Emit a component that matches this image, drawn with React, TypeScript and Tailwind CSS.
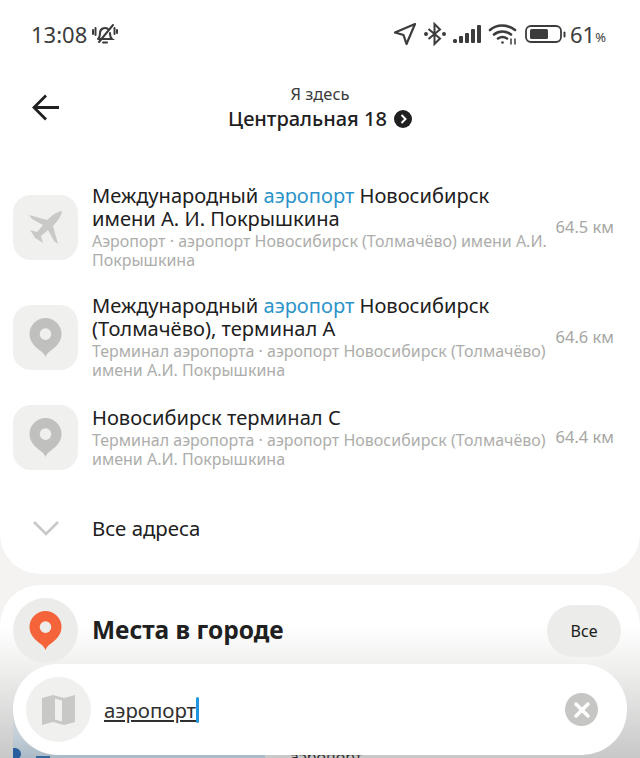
import { X } from "lucide-react";

const FONT = "font-['Noto_Sans',sans-serif]";

function PlaneIcon() {
  return (
    <svg width="36" height="36" viewBox="0 0 36 36" fill="#c9c9c7">
      <path d="M34 2C30 2.500 25 5.500 22 8.500L19 11 1 6l3 4 11 6-6 7-7-2 3 4.500 2 3.500 3.500 2 4.500 3-2-7 7-6 6 11 4 3-5-18 2.500-3C30.500 11 33.500 6 34 2Z" />
    </svg>
  );
}

function PinIcon({ color }: { color: string }) {
  return (
    <svg width="33" height="41" viewBox="0 0 34 40" fill="none">
      <path
        fillRule="evenodd"
        d="M17 0a16.500 16.500 0 0 1 16.500 16.500c0 8-6 13.600-11.500 17.500-2.500 1.800-4 3.500-5 6-1-2.500-2.500-4.200-5-6C6.500 30.100.5 24.500.5 16.500A16.500 16.500 0 0 1 17 0zm0 10.500a6 6 0 1 0 0 12 6 6 0 0 0 0-12z"
        fill={color}
      />
    </svg>
  );
}

function Result({
  icon,
  before,
  hit,
  after,
  line2,
  sub1,
  sub2,
  dist,
  className,
}: {
  icon: React.ReactNode;
  before: string;
  hit?: string;
  after?: string;
  line2?: string;
  sub1: string;
  sub2: string;
  dist: string;
  className?: string;
}) {
  return (
    <div className={`flex items-center pl-[13px] pr-[26px] ${className ?? ""}`}>
      <div className="flex h-[65px] w-[65px] shrink-0 items-center justify-center rounded-[18px] bg-[#f0f0ef]">
        {icon}
      </div>
      <div className="ml-[14px] min-w-0 flex-1">
        <div className="text-[20.1px] leading-[22.5px] text-[#202020]">
          {before}
          {hit && <span className="text-[#2b93c9]">{hit}</span>}
          {after}
          {line2 && <div>{line2}</div>}
        </div>
        <div className="mt-[2px] whitespace-nowrap text-[16px] leading-[18.500px] text-[#adadab]">
          <div>{sub1}</div>
          <div>{sub2}</div>
        </div>
      </div>
      <div className="shrink-0 whitespace-nowrap text-[16.5px] text-[#a6a6a4]">{dist}</div>
    </div>
  );
}

export default function App() {
  return (
    <div className={`relative h-[758px] w-[640px] overflow-hidden bg-[#f4f3f1] ${FONT}`}>
      <div className="h-[574px] rounded-b-[40px] bg-white">
        {/* status bar */}
        <div className="flex h-[68px] items-center justify-between pl-[31px] pr-[34px] text-[#3c3c3c]">
          <div className="flex items-center gap-[4px]">
            <span className="text-[22px] leading-none">13:08</span>
            <svg width="28" height="24" viewBox="0 0 28 24" fill="none" stroke="currentColor" strokeWidth="2" strokeLinecap="round">
              <path d="M7 17c2-1.500 2-3 2-6a5 5 0 0 1 9-3M19 11c0 3 0 4.500 2 6H7M12 20.500h4M22 3 8 20M2 8v4M4.500 6v7M23.500 6v6M26 8v3" />
            </svg>
          </div>
          <div className="flex items-center">
            <svg width="24" height="24" viewBox="0 0 24 24" fill="none" stroke="currentColor" strokeWidth="2.200" strokeLinejoin="round">
              <path d="M22 2 2 10.500l8.500 2.500 3 9z" />
            </svg>
            <svg className="ml-[6px]" width="24" height="24" viewBox="0 0 24 24" fill="none" stroke="currentColor" strokeWidth="2">
              <path d="M5.500 7 17 16.500 11.500 22V2L17 7.500 5.500 17" />
              <circle cx="3" cy="12" r="1" fill="currentColor" />
              <circle cx="21" cy="12" r="1" fill="currentColor" />
            </svg>
            <svg className="ml-[5px]" width="30" height="20" viewBox="0 0 30 20" fill="currentColor">
              <rect x="1" y="15" width="4" height="4" rx="1.500" />
              <rect x="7" y="12" width="4" height="7" rx="1" />
              <rect x="13" y="9" width="4" height="10" rx="1" />
              <rect x="19" y="5" width="4" height="14" rx="1" />
              <rect x="25" y="1" width="4" height="18" rx="1" />
            </svg>
            <svg className="ml-[6px]" width="30" height="22" viewBox="0 0 30 22" fill="none" stroke="currentColor" strokeWidth="2.600" strokeLinecap="round">
              <path d="M2 7c7-6 17-6 25 0M6 11.500c5-4 12-4 17 0M10 15.500c3-2 6-2 9 0" />
              <circle cx="14.500" cy="19.500" r="1.300" fill="currentColor" stroke="none" />
              <path d="M23 16v5M27 16v5" strokeWidth="1.500" />
            </svg>
            <svg className="ml-[7px]" width="42" height="20" viewBox="0 0 42 20" fill="none">
              <rect x="1" y="2" width="35" height="16" rx="5" stroke="currentColor" strokeWidth="1.800" />
              <rect x="5" y="5" width="18" height="10" rx="1.500" fill="currentColor" />
              <rect x="38.500" y="7.500" width="2" height="6" rx="1" fill="currentColor" />
            </svg>
            <span className="ml-[3px] text-[22px] leading-none">61</span>
            <span className="self-end pb-[2px] text-[13px] leading-none">%</span>
          </div>
        </div>
        {/* header */}
        <div className="relative flex h-[76px] flex-col items-center pt-[16px]">
          <svg className="absolute left-[32px] top-[26px]" width="28" height="28" viewBox="0 0 28 28" fill="none" stroke="#202020" strokeWidth="2.800">
            <path d="M27 13.500H2M14 1.500 2 13.500l12 12" />
          </svg>
          <div className="text-[16.5px] leading-[20px] text-[#3c3c3c]">Я здесь</div>
          <div className="mt-[2px] flex items-center gap-[7px]">
            <span className="text-[20px] font-medium leading-[26px] text-[#202020]">Центральная 18</span>
            <span className="flex h-[18px] w-[18px] items-center justify-center rounded-full bg-[#202020]">
              <svg width="10" height="10" viewBox="0 0 10 10" fill="none" stroke="white" strokeWidth="2">
                <path d="m3.500 1 4 4-4 4" />
              </svg>
            </span>
          </div>
        </div>
        {/* results */}
        <Result
          className="mt-[41px]"
          icon={<PlaneIcon />}
          before="Международный "
          hit="аэропорт"
          after=" Новосибирск"
          line2="имени А. И. Покрышкина"
          sub1="Аэропорт · аэропорт Новосибирск (Толмачёво) имени А.И."
          sub2="Покрышкина"
          dist="64.5 км"
        />
        <Result
          className="mt-[26px]"
          icon={<PinIcon color="#c0c0be" />}
          before="Международный "
          hit="аэропорт"
          after=" Новосибирск"
          line2="(Толмачёво), терминал А"
          sub1="Терминал аэропорта · аэропорт Новосибирск (Толмачёво)"
          sub2="имени А.И. Покрышкина"
          dist="64.6 км"
        />
        <Result
          className="mt-[26px]"
          icon={<PinIcon color="#c0c0be" />}
          before="Новосибирск терминал С"
          sub1="Терминал аэропорта · аэропорт Новосибирск (Толмачёво)"
          sub2="имени А.И. Покрышкина"
          dist="64.4 км"
        />
        <div className="mt-[45px] flex items-center pl-[33px]">
          <svg width="26" height="16" viewBox="0 0 26 16" fill="none" stroke="#c8c8c6" strokeWidth="2.600">
            <path d="m1 2 12 12L25 2" />
          </svg>
          <span className="ml-[33px] text-[20.4px] leading-[26px] text-[#202020]">Все адреса</span>
        </div>
      </div>
      {/* places card */}
      <div className="mt-[11px] h-[173px] rounded-t-[40px] bg-[linear-gradient(to_bottom,#fff_40px,#f1f1f0_79px,#c8c8c8_173px)] pt-[13px]">
        <div className="flex items-center px-[13px]">
          <div className="flex h-[65px] w-[65px] items-center justify-center rounded-full bg-[#ececeb]">
            <PinIcon color="#f4633a" />
          </div>
          <span className="ml-[14px] flex-1 text-[24.5px] font-bold text-[#202020]">Места в городе</span>
          <div className="mr-[6px] flex h-[52px] w-[74px] items-center justify-center rounded-[26px] bg-[#ececeb] text-[16px] text-[#202020]">
            Все
          </div>
        </div>
        {/* first place, mostly hidden behind the search bar */}
        <div className="mt-px flex pl-[13px]">
          <div className="relative h-[95px] w-[252px] bg-[linear-gradient(to_bottom,transparent_35px,#c5d0d8_70px,#a9b9c5_95px)]">
            <span className="absolute left-0 top-[84px] h-[12px] w-[8px] rounded-r-full bg-[#2a5f9e]" />
            <span className="absolute left-[23px] top-[92px] h-[4px] w-[14px] bg-[#34679c]" />
          </div>
          <span className="ml-[25px] mt-[83px] text-[16px] leading-[20px] text-[#303030]">аэропорт</span>
        </div>
      </div>
      {/* search bar */}
      <div className="absolute left-[13px] top-[664px] flex h-[91px] w-[614px] items-center rounded-[45px] bg-white pl-[13px] pr-[29px]">
        <div className="flex h-[65px] w-[65px] items-center justify-center rounded-full bg-[#f0f0ef]">
          <svg width="33" height="30" viewBox="0 0 33 30" fill="none">
            <path d="M0 3 11 0l11 3 11-3v27l-11 3-11-3-11 3z" fill="#c8c8c6" />
            <path d="M13 3.500 20 5.500v21l-7-2z" fill="#f0f0ef" />
          </svg>
        </div>
        <div className="ml-[13px] flex flex-1 items-center">
          <span className="text-[20.4px] leading-[26px] text-[#303030] underline underline-offset-2">аэропорт</span>
          <span className="h-[26px] w-[3px] rounded-sm bg-[#2196e0]" />
        </div>
        <div className="flex h-[33px] w-[33px] items-center justify-center rounded-full bg-[#c6c6c4]">
          <X size={24} strokeWidth={3.5} color="white" />
        </div>
      </div>
    </div>
  );
}
